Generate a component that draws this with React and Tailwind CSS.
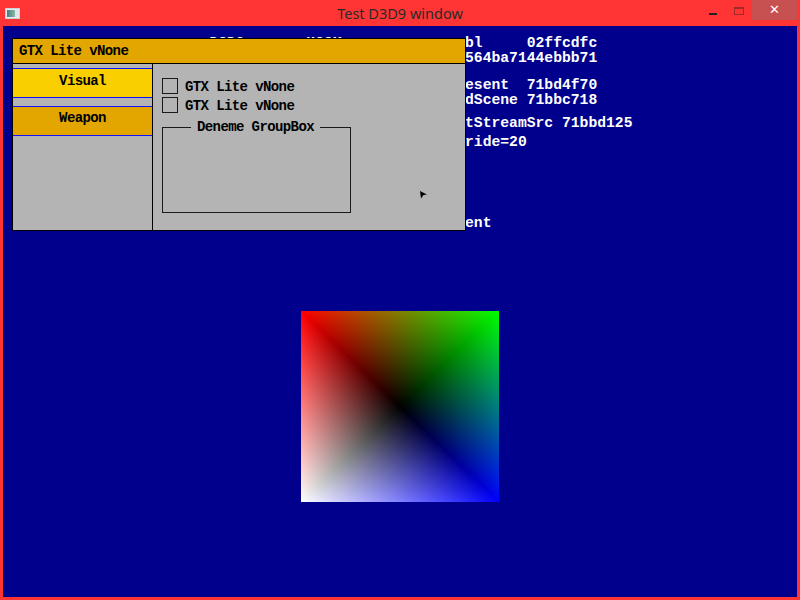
import React from 'react'

const mono = { fontFamily: '"Liberation Mono", "DejaVu Sans Mono", monospace' }

const debugLines = [
  { top: 'top-[11px]', text: 'bl     02ffcdfc', prefix: ' D3D9       HOOK   swap   vars' },
  { top: 'top-[26px]', text: '564ba7144ebbb71' },
  { top: 'top-[53px]', text: 'esent  71bd4f70' },
  { top: 'top-[68px]', text: 'dScene 71bbc718' },
  { top: 'top-[91px]', text: 'tStreamSrc 71bbd125' },
  { top: 'top-[110px]', text: 'ride=20' },
  { top: 'top-[191px]', text: 'ent' },
]

function TitleBar() {
  return (
    <div className="h-[26px] flex items-start relative">
      {/* app icon */}
      <div className="mt-[8px] ml-[5px] w-[15px] h-[11px] bg-[#e8eef0] border border-[#c9d3d6] p-[1px] flex">
        <div className="flex-1 bg-gradient-to-r from-[#3d7f8a] to-[#8fb8a0]" />
        <div className="w-[3px] bg-[#dfe7ea]" />
      </div>
      <div
        className="flex-1 text-center text-[14.5px] text-[#2a2a2a] pt-[3px] pl-[80px]"
        style={{ fontFamily: '"Noto Sans", "Open Sans", sans-serif' }}
      >
        Test D3D9 window
      </div>
      {/* window buttons */}
      <div className="flex items-start h-[20px]">
        <div className="w-[26px] h-[20px] flex items-start justify-center pt-[13px]">
          <div className="w-[8px] h-[2px] bg-[#222]" />
        </div>
        <div className="w-[26px] h-[20px] flex items-start justify-center pt-[7px]">
          <div className="w-[10px] h-[8px] border border-[#9e2a2a] border-t-2" />
        </div>
        <div className="w-[45px] h-[20px] bg-[#c75050] flex items-center justify-center text-white text-[13px] font-bold" style={{ fontFamily: '"DejaVu Sans", sans-serif' }}>
          ✕
        </div>
      </div>
      <div className="w-[3px]" />
    </div>
  )
}

function Checkbox({ label }) {
  return (
    <div className="flex items-center">
      <div className="w-4 h-4 border border-[#1a1a1a]" />
      <span className="ml-[7px] text-[14px] font-bold tracking-[-0.6px] text-black leading-none pt-[1px]">{label}</span>
    </div>
  )
}

function Panel() {
  return (
    <div className="absolute left-[9px] top-[12px] w-[454px] h-[193px] border border-black bg-[#b4b4b4] flex flex-col" style={mono}>
      <div className="h-[25px] bg-[#e3a600] border-b border-black flex items-center pl-[6px] text-[14px] font-bold tracking-[-0.6px] text-black">
        GTX Lite vNone
      </div>
      <div className="flex-1 flex">
        <div className="w-[140px] border-r border-black pt-[4px] flex flex-col gap-[8px]">
          <div className="h-[30px] bg-[#f9cf00] border-y border-[#0a14ff] flex items-center justify-center pb-[4px] text-[14px] font-bold tracking-[-0.6px]">
            Visual
          </div>
          <div className="h-[30px] bg-[#e3a600] border-y border-[#0a14ff] flex items-center justify-center pb-[5px] text-[14px] font-bold tracking-[-0.6px]">
            Weapon
          </div>
        </div>
        <div className="flex-1 pl-[9px] pt-[14px] flex flex-col gap-[3px]">
          <Checkbox label="GTX Lite vNone" />
          <Checkbox label="GTX Lite vNone" />
          <div className="mt-[11px] w-[189px] h-[86px] border border-[#1a1a1a] relative">
            <span className="absolute left-[28px] -top-[9px] bg-[#b4b4b4] px-[6px] text-[14px] font-bold tracking-[-0.6px] leading-[16px]">
              Deneme GroupBox
            </span>
          </div>
        </div>
      </div>
    </div>
  )
}

function ColorQuad() {
  return (
    <div className="absolute left-[298px] top-[285px] w-[198px] h-[191px] bg-black isolate">
      <div className="absolute inset-0 mix-blend-plus-lighter bg-[linear-gradient(to_bottom_right,#ff0000,#000000_50%)]" />
      <div className="absolute inset-0 mix-blend-plus-lighter bg-[linear-gradient(to_bottom_left,#00ff00,#000000_50%)]" />
      <div className="absolute inset-0 mix-blend-plus-lighter bg-[linear-gradient(to_top_left,#0000ff,#000000_50%)]" />
      <div className="absolute inset-0 mix-blend-plus-lighter bg-[linear-gradient(to_top_right,#ffffff,#000000_50%)]" />
    </div>
  )
}

export default function App() {
  return (
    <div className="w-[800px] h-[600px] bg-[#ff3535] flex flex-col overflow-hidden">
      <TitleBar />
      <div className="flex-1 mx-[3px] mb-[3px] bg-[#00008c] relative overflow-hidden">
        {/* device debug output */}
        {debugLines.map((l, i) => (
          <div
            key={i}
            className={`absolute left-[462px] ${l.top} text-white font-bold text-[14.7px] leading-[12px] whitespace-pre`}
            style={mono}
          >
            {l.prefix && <span className="absolute right-full top-0">{l.prefix}</span>}
            {l.text}
          </div>
        ))}

        <Panel />
        <ColorQuad />

        {/* mouse cursor */}
        <svg className="absolute left-[417px] top-[165px]" width="9" height="9" viewBox="0 0 9 9">
          <polygon points="0,0 7,3.5 3.5,4 1,7.5" fill="#000" />
        </svg>
      </div>
    </div>
  )
}
